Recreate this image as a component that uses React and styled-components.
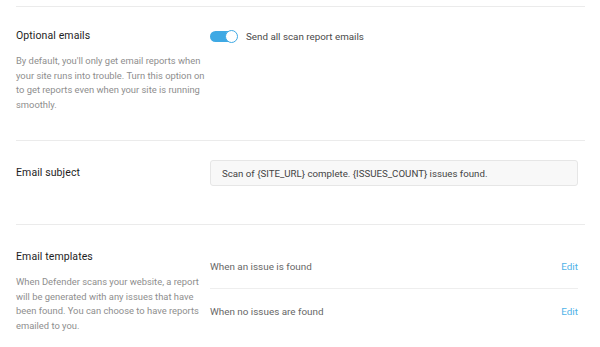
import React from 'react'
import styled, { createGlobalStyle } from 'styled-components'

const Global = createGlobalStyle`
    body {
        margin: 0;
        background: #fff;
        font-family: Roboto, "Liberation Sans", sans-serif;
    }
`;

const Page = styled.div`
    padding: 6px 15px 0 16px;
    width: 569px;
`;

const Section = styled.div`
    display: grid;
    grid-template-columns: 194px 1fr;
    border-top: 1px solid #ebebeb;
    padding: ${props => props.pad || '22px 7px 28px 0'};
`;

const Title = styled.div`
    font-size: 10.5px;
    font-weight: 400;
    color: #1e1e1e;
    line-height: 14px;
    letter-spacing: 0.1px;
`;

const Desc = styled.p`
    margin: 11px 0 0;
    font-size: 9.4px;
    line-height: 14.5px;
    color: #8e8e8e;
    padding-right: 2px;
`;

const ToggleRow = styled.label`
    display: flex;
    align-items: center;
    gap: 9px;
    height: 14px;
    font-size: 9.8px;
    color: #4a4a4a;
`;

const Track = styled.span`
    position: relative;
    display: inline-block;
    width: 27px;
    height: 11px;
    border-radius: 6px;
    background: #3fa9e4;
`;

const Knob = styled.span`
    position: absolute;
    right: -1px;
    top: -1px;
    width: 11px;
    height: 11px;
    border-radius: 50%;
    background: #fff;
    border: 1px solid #3fa9e4;
`;

const Input = styled.div`
    height: 24px;
    display: flex;
    align-items: center;
    padding: 0 11px;
    background: #f8f8f8;
    border: 1px solid #e6e6e6;
    border-radius: 3px;
    font-size: 9.7px;
    color: #444;
`;

const TemplateList = styled.div`
    display: flex;
    flex-direction: column;
    margin-top: -6px;
`;

const TemplateRow = styled.div`
    display: flex;
    align-items: center;
    justify-content: space-between;
    height: 44px;
    font-size: 9.9px;
    color: #666;
    & + & {
        border-top: 1px solid #eeeeee;
    }
`;

const EditLink = styled.a`
    color: #4fb2e8;
    text-decoration: none;
    cursor: pointer;
`;

export default function App() {
    return (
        <Page>
            <Global />
            <Section>
                <div>
                    <Title>Optional emails</Title>
                    <Desc>By default, you'll only get email reports when your site runs into trouble. Turn this option on to get reports even when your site is running smoothly.</Desc>
                </div>
                <div>
                    <ToggleRow>
                        <Track><Knob /></Track>
                        Send all scan report emails
                    </ToggleRow>
                </div>
            </Section>
            <Section pad="19px 7px 38px 0">
                <Title style={{ alignSelf: 'center' }}>Email subject</Title>
                <Input>Scan of {'{SITE_URL}'} complete. {'{ISSUES_COUNT}'} issues found.</Input>
            </Section>
            <Section pad="25px 7px 14px 0">
                <div>
                    <Title>Email templates</Title>
                    <Desc>When Defender scans your website, a report will be generated with any issues that have been found. You can choose to have reports emailed to you.</Desc>
                </div>
                <TemplateList>
                    <TemplateRow>
                        When an issue is found
                        <EditLink>Edit</EditLink>
                    </TemplateRow>
                    <TemplateRow>
                        When no issues are found
                        <EditLink>Edit</EditLink>
                    </TemplateRow>
                </TemplateList>
            </Section>
        </Page>
    )
}
